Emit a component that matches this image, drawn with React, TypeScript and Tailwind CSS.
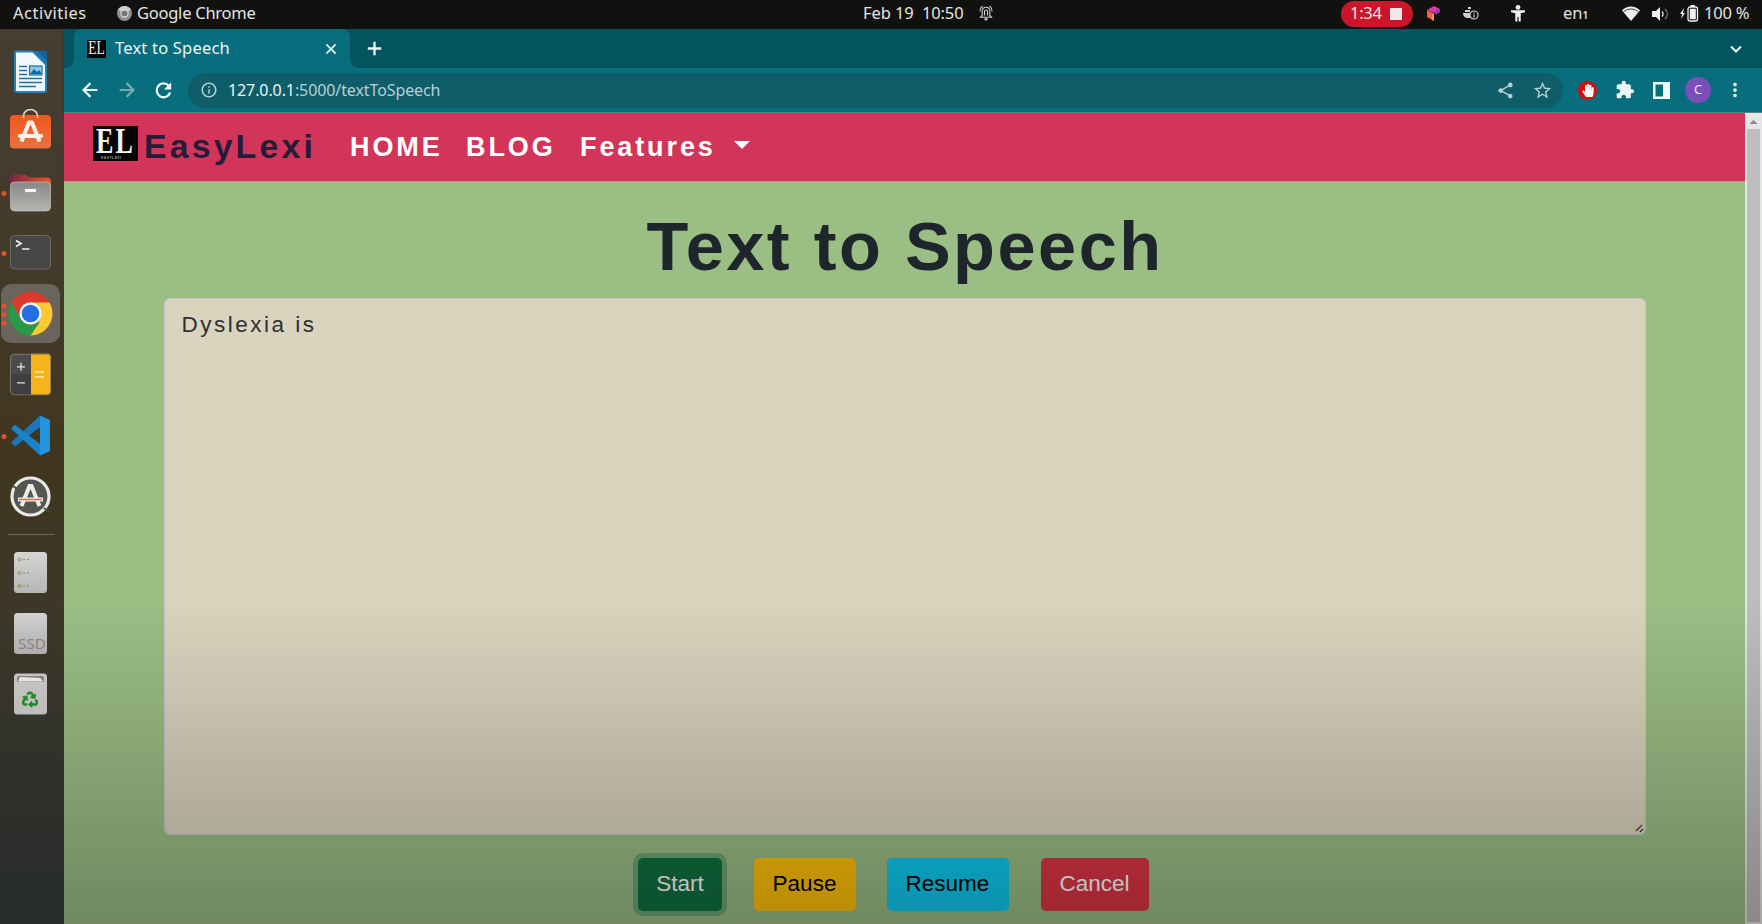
import type { ReactNode } from 'react';
import { MdExtension, MdInfoOutline, MdMoreVert, MdOutlineStarBorder, MdShare } from 'react-icons/md';
import { FaRecycle, FaHandPaper } from 'react-icons/fa';

function Glyph({ d, className, head }: { d: string; className: string; head?: string }) {
  return (
    <svg viewBox="0 0 24 24" fill="none" stroke="currentColor" strokeWidth="2.4" className={className}>
      <path d={d} />
      {head && <path d={head} fill="currentColor" stroke="none" />}
    </svg>
  );
}

function Logo({ className, small }: { className: string; small?: boolean }) {
  return (
    <svg viewBox="0 0 45 35" preserveAspectRatio="none" overflow="visible" className={className}>
      <rect width="45" height="35" fill="#050505" />
      <text x="3" y="26.5" fontFamily="Liberation Serif" fontSize="35" textLength="39" lengthAdjust="spacingAndGlyphs" fill="#f4f4f4">EL</text>
      {!small && <text x="8" y="33" fontFamily="Liberation Sans" fontSize="3.6" textLength="23" fill="#999">EASYLEXI</text>}
    </svg>
  );
}

function TopBar() {
  return (
    <div className="flex h-[29px] shrink-0 items-center bg-[#11110f] text-[16.5px] text-[#e4e4e2]">
      <div className="flex w-[863px] items-center pb-[2px] pl-[13px]">
        <span className="w-[104px] tracking-[0.5px]">Activities</span>
        <svg viewBox="0 0 16 16" className="mr-[5px] h-[15px] w-[15px]">
          <circle cx="8" cy="8" r="8" fill="#8f8f8f" />
          <path d="M8 8 1 4a8 8 0 0 1 14 0z" fill="#cfcfcf" />
          <circle cx="8" cy="8" r="3.8" fill="#777" stroke="#ddd" strokeWidth="1.2" />
        </svg>
        <span className="tracking-[-0.25px]">Google Chrome</span>
      </div>
      <div className="flex w-[478px] items-center pb-[3px]">
        <span className="w-[59px] tracking-[-0.1px]">Feb 19</span>
        <span className="w-[57px] tracking-[-0.15px]">10:50</span>
        <svg viewBox="0 0 14 16" className="h-[16px] w-[14px]" fill="none" stroke="#d2d2d0" strokeWidth="1.1">
          <path d="M3.200 10.500V6.500C3.200 3 5 2.200 7 2.200S10.800 3 10.800 6.500V10.500L12.500 12.300H1.500zM5.500 10.500V6.500C5.500 4.500 8.500 4.500 8.500 6.500V10.500M1 6.500C1 4 1.800 2.300 3.500 1M13 6.500C13 4 12.200 2.300 10.500 1" />
          <path d="M5.500 14.300h3" strokeWidth="2" />
        </svg>
      </div>
      <div className="flex items-center pb-[2px]">
        <div className="mr-[14px] flex h-[26px] w-[72px] items-center rounded-full bg-[#c9162b] pl-[9px]">
          <span className="w-[40px] pb-px tracking-[-0.3px]">1:34</span>
          <span className="h-[12px] w-[12px] bg-[#f1e9e9]" />
        </div>
        <svg viewBox="0 0 14 15" className="mr-[22px] h-[15px] w-[14px]">
          <path d="M0 4 7 0l6 3-6 4z" fill="#d63aa6" />
          <path d="M0 4l7 3.500V15L0 11z" fill="#f0603a" />
          <path d="M13 3v3L9 8.500 7 7z" fill="#a03bc8" />
          <path d="M5 9l2-1.500V15l-2-1z" fill="#f09050" />
        </svg>
        <svg viewBox="0 0 16 13" className="mr-[32px] h-[13px] w-[16px]" fill="#cfcfcd">
          <path d="M0 6h10v5H5C2 11 0 9 0 6zM2 3h5v2H2zM5 0h3v2H5z" />
          <circle cx="11" cy="8" r="4" fill="#11110f" stroke="#cfcfcd" strokeWidth="1.200" />
          <path d="M10.400 5.500h1.200v1.200h-1.200zM10.400 7.500h1.200v3h-1.200z" />
        </svg>
        <svg viewBox="0 0 14 17" className="mr-[38px] h-[17px] w-[14px]" fill="#efefed">
          <circle cx="7" cy="2.400" r="2.400" />
          <path d="M0 5.300h14v1.900l-4.300 1V16.500H7.600V12H6.400v4.500H4.300V8.200L0 7.200z" />
        </svg>
        <span className="w-[59px]">en<span className="text-[10px] font-semibold">1</span></span>
        <svg viewBox="0 0 18 15" className="mr-[12px] h-[15px] w-[18px]">
          <path d="M0 4.500C5-1 13-1 18 4.500L9 15z" fill="#efefed" />
          <path d="M1.500 6C6 2 12 2 16.500 6" fill="none" stroke="#11110f" strokeWidth=".8" />
        </svg>
        <svg viewBox="0 0 17 14" className="mr-[11px] h-[14px] w-[17px]">
          <path d="M0 4h4l4-4v14l-4-4H0z" fill="#efefed" />
          <path d="M10 4.500c1.300 1.300 1.300 3.700 0 5" fill="none" stroke="#efefed" strokeWidth="1.400" />
          <path d="M13 2c3 3 3 7 0 10" fill="none" stroke="#777" strokeWidth="1.400" />
        </svg>
        <svg viewBox="0 0 19 17" className="mr-[5px] h-[17px] w-[19px]">
          <path d="M4 3 0 9h2.200L1 14l4-6H3z" fill="#efefed" />
          <rect x="8" y="2" width="9.500" height="14" rx="2" fill="none" stroke="#efefed" strokeWidth="1.300" />
          <path d="M10.500 0h4.500v2h-4.500zM9.800 3.800h6v10.400h-6z" fill="#efefed" />
        </svg>
        <span className="whitespace-nowrap tracking-[-0.2px]">100 %</span>
      </div>
    </div>
  );
}

function Slot({ children, dots = 0, active }: { children: ReactNode; dots?: number; active?: boolean }) {
  const ys = dots === 3 ? [22, 30.5, 39] : dots === 1 ? [30.5] : [];
  return (
    <svg viewBox="0 0 61 60.75" className="h-[60.75px] w-[61px] shrink-0">
      {active && <rect x="1" y="0" width="59" height="59" rx="10" fill="#69645c" />}
      {ys.map((y) => <circle key={y} cx="4" cy={y} r="2.500" fill="#e0532a" />)}
      {children}
    </svg>
  );
}

function Dock() {
  return (
    <div className="flex w-[64px] shrink-0 flex-col border-r border-[#3b3a2b] bg-linear-to-b from-[#473e33] via-[#40361f] to-[#353b3b] pt-[12px]">
      <Slot>
        <path d="M16 10.500h17l13 13V49q0 2-2 2H17q-2 0-2-2V13q0-2.500 1-2.500z" fill="#f1f7fb" stroke="#2482bd" strokeWidth="2" />
        <path d="M38 10h9v9z" fill="#126299" /><path d="M33 10l14 14v-5L38 10z" fill="#1b73ad" />
        <path d="M19 25.500h8M19 29.500h8M19 33.500h8M19 37.500h23M19 41.500h23M19 45.500h17" stroke="#1b70a8" strokeWidth="1.700" />
        <rect x="29.500" y="25" width="12.500" height="9" fill="#8bc8ec" stroke="#1b70a8" strokeWidth="1.200" />
        <path d="M30 33l4-5 3 3 2-2 3 4z" fill="#14689f" />
      </Slot>
      <Slot>
        <defs><linearGradient id="bag" x2="0" y2="1"><stop stopColor="#f1571d" /><stop offset="1" stopColor="#ec7042" /></linearGradient></defs>
        <rect x="10" y="13" width="41" height="33.500" rx="4" fill="url(#bag)" />
        <path d="M23.500 16v-2a7 6.500 0 0 1 14 0v2" fill="none" stroke="#e5d9b5" strokeWidth="1.700" />
        <path d="M21.500 39.500 29 20.500h3l7.500 19" fill="none" stroke="#fff4e8" strokeWidth="4" strokeLinejoin="round" />
        <path d="M20 34h21" stroke="#fff4e8" strokeWidth="4.200" strokeLinecap="round" />
      </Slot>
      <Slot dots={1}>
        <defs>
          <linearGradient id="fold"><stop stopColor="#7b2146" /><stop offset="1" stopColor="#e85a26" /></linearGradient>
          <linearGradient id="file" x2="0" y2="1"><stop stopColor="#888" /><stop offset="1" stopColor="#b5b4b1" /></linearGradient>
        </defs>
        <g transform="translate(0 -1.5)">
          <path d="M10 17q0-4 4-4h11l4 3h18q4 0 4 4v8H10z" fill="url(#fold)" />
          <rect x="10.500" y="20.500" width="40" height="29" rx="4" fill="url(#file)" stroke="#c4c2bd" strokeWidth=".7" />
          <path d="M25 29h11" stroke="#f5f5f3" strokeWidth="3.200" />
        </g>
      </Slot>
      <Slot dots={1}>
        <rect x="10.500" y="12.500" width="40" height="33.500" rx="4" fill="#474747" stroke="#6a6964" />
        <path d="M16 17.500l5 3-5 3M22 26h7.500" fill="none" stroke="#eee" strokeWidth="1.700" />
      </Slot>
      <Slot dots={3} active>
        <circle cx="30.500" cy="29.500" r="22" fill="#db3b2f" />
        <path d="M30.500 18.500h19A22 22 0 0 1 30.500 51.500L40 35z" fill="#fcc934" />
        <path d="M11.400 18.500 21 35a11 11 0 0 0 14.500 4.300l4.500-1.300-9.500 13.500A22 22 0 0 1 11.400 18.500z" fill="#2b9848" />
        <circle cx="30.500" cy="29.500" r="11" fill="#f5f7fa" /><circle cx="30.500" cy="29.500" r="8.800" fill="#2270e2" />
      </Slot>
      <Slot>
        <g transform="translate(0 -.7)">
          <path d="M31 9.500H14q-4 0-4 4V30h21z" fill="#4d4c4c" /><path d="M10 30h21v20.500H14q-4 0-4-4z" fill="#3f3f40" />
          <path d="M31 9.500h16q4 0 4 4v33q0 4-4 4H31z" fill="#f6b41c" />
          <path d="M17 22.500h8M21 18.500v8M17 38.500h8" stroke="#e4e4e4" strokeWidth="1.300" />
          <path d="M35 27.500h9M35 32.500h9" stroke="#ffe09a" strokeWidth="1.800" />
          <rect x="10.500" y="10" width="40" height="40.500" rx="4" fill="none" stroke="#87816f" strokeWidth=".8" />
        </g>
      </Slot>
      <Slot dots={1}>
        <g transform="translate(0 -1)">
          <path d="M40 10.500 50 15v31L40 50.500z" fill="#2494df" />
          <path d="M40 10.500 11 37.500l4 4L40 22z" fill="#1a75ba" />
          <path d="M11 23.500l4-3.800L40 39v11.500z" fill="#1983ca" />
        </g>
      </Slot>
      <Slot>
        <circle cx="30.500" cy="30.500" r="18.500" fill="#555553" stroke="#eae9e5" strokeWidth="3.200" />
        <path d="M12 19l5 4M44 42l5 4" stroke="#504a40" strokeWidth="2" />
        <path d="M21.500 40 29.500 20h2l8 20" fill="none" stroke="#eeece7" strokeWidth="4" />
        <path d="M18 33.500h25" stroke="#eeece7" strokeWidth="4" /><path d="M19 33.500h23" stroke="#e46a3b" strokeWidth="1.400" />
      </Slot>
      <div className="mx-[8px] mt-[7px] mb-[7px] h-px shrink-0 bg-[#6d6850]" />
      <Slot>
        <defs><linearGradient id="disk" x2="0" y2="1"><stop stopColor="#d6d5d4" /><stop offset="1" stopColor="#b7b5b4" /></linearGradient></defs>
        <rect x="14" y="10" width="33" height="41" rx="3.500" fill="url(#disk)" />
        {[17.5, 31, 44].map((y) => (
          <g key={y}><circle cx="19.500" cy={y} r="1.500" fill="none" stroke="#78945c" /><circle cx="24" cy={y} r=".8" fill="#777" /><circle cx="28" cy={y} r=".8" fill="#777" /></g>
        ))}
      </Slot>
      <Slot>
        <rect x="14" y="10" width="33" height="41" rx="3.500" fill="url(#disk)" />
        <text x="18" y="45.500" fontFamily="Noto Sans" fontSize="15" textLength="28" lengthAdjust="spacingAndGlyphs" fill="#8b8a89">SSD</text>
      </Slot>
      <Slot>
        <rect x="14" y="9.500" width="33" height="41" rx="3.500" fill="#d3d2d0" />
        <path d="M17 18v-4q0-2 2-2h23q2 0 2 2v4z" fill="#8f8b87" /><path d="M18 17.500l2-4.500 20 1 3.500 3.500z" fill="#f6f5f3" />
        <FaRecycle x="22" y="27.500" width="17" height="17" color="#24962b" stroke="#24962b" strokeWidth="22" />
      </Slot>
    </div>
  );
}

function TabStrip() {
  return (
    <div className="flex h-[39px] shrink-0 items-end bg-[#03545f] text-[#eaf6f7]">
      <svg viewBox="0 0 10 10" className="h-[10px] w-[10px]"><path d="M10 0v10H0Q10 10 10 0z" fill="#086e7d" /></svg>
      <div className="flex h-full w-[276px] items-center rounded-t-[8px] bg-[#086e7d] pl-[13px]">
        <Logo small className="mr-[9px] h-[18px] w-[19px]" />
        <span className="w-[208px] text-[16.5px] tracking-[0.2px]">Text to Speech</span>
        <Glyph d="M5 5l14 14M19 5L5 19" className="h-[16px] w-[16px]" />
      </div>
      <svg viewBox="0 0 10 10" className="h-[10px] w-[10px]"><path d="M0 0v10h10Q0 10 0 0z" fill="#086e7d" /></svg>
      <Glyph d="M12 5v14M5 12h14" className="mb-[8px] ml-[3px] h-[23px] w-[23px]" />
      <Glyph d="M6 9l6 6 6-6" className="mr-[16px] mb-[9px] ml-auto h-[20px] w-[20px]" />
    </div>
  );
}

function Toolbar() {
  return (
    <div className="flex h-[45px] shrink-0 items-center border-b border-[#4d8792] bg-[#086e7d] text-[#eaf6f7]">
      <Glyph d="M20 12H5M12.500 4.500L5 12l7.500 7.500" className="ml-[15px] h-[22px] w-[22px]" />
      <Glyph d="M4 12h15M11.500 4.500L19 12l-7.500 7.500" className="ml-[15px] h-[22px] w-[22px] text-[#76aab3]" />
      <Glyph d="M17.500 7A7.200 7.200 0 1 0 19 14" head="M20 3.500V11h-7.500z" className="ml-[14px] h-[23px] w-[23px]" />
      <div className="mx-[13px] flex h-[35px] w-[1375px] items-center rounded-full bg-[#0f5d69] pl-[12px]">
        <MdInfoOutline className="mr-[10px] h-[18px] w-[18px] text-[#b6cfd3]" />
        <span className="text-[16px] tracking-[-0.1px] text-[#b4d1d4]"><span className="text-[#eaf6f7]">127.0.0.1</span>:5000/textToSpeech</span>
        <MdShare className="mr-[17px] ml-auto h-[19px] w-[19px] text-[#b6cfd3]" />
        <MdOutlineStarBorder className="mr-[10px] h-[21px] w-[21px] text-[#b6cfd3]" />
      </div>
      <span className="ml-[2px] flex h-[19px] w-[19px] items-center justify-center rounded-full bg-[#d30d10]"><FaHandPaper className="h-[13px] w-[12px] text-white" /></span>
      <MdExtension className="ml-[18px] h-[20px] w-[20px]" />
      <svg viewBox="0 0 17 17" className="ml-[18px] h-[17px] w-[17px]"><path d="M0 0h17v17H0zM2.500 2.500v12H10v-12z" fill="#f3fafb" fillRule="evenodd" /></svg>
      <span className="ml-[15px] flex h-[26px] w-[26px] items-center justify-center rounded-full bg-[#7b4fb9] text-[13px] text-[#efe6f8]">C</span>
      <MdMoreVert className="ml-[13px] h-[22px] w-[22px]" />
    </div>
  );
}

function Page() {
  return (
    <div className="flex min-h-0 flex-1">
      <div className="flex w-[1681px] shrink-0 flex-col bg-[#9bbe85] font-['Liberation_Sans',sans-serif]">
        <nav className="flex h-[69px] shrink-0 items-center border-b border-[#b89c78] bg-[#d23559] pl-[29px] font-bold tracking-[2.9px] text-white">
          <Logo className="mb-[8px] h-[35px] w-[45px]" />
          <span className="ml-[6px] w-[206px] pb-[2px] text-[33.75px] tracking-[3.2px] text-[#261c38]">EasyLexi</span>
          <span className="w-[116px] text-[27px]">HOME</span>
          <span className="w-[114px] text-[27px]">BLOG</span>
          <span className="text-[27px]">Features</span>
          <svg viewBox="0 0 16 8" className="mb-[5px] ml-[18px] h-[8px] w-[16px]"><path d="M0 0h16L8 8z" fill="#fff" /></svg>
        </nav>
        <h1 className="mt-[23px] h-[93px] pl-px text-center text-[68.5px] leading-[83px] font-bold tracking-[2.5px] text-[#1f262b]">Text to Speech</h1>
        <div className="relative mx-auto h-[537px] w-[1482px] shrink-0 rounded-[6px] border border-[#bfcad0] bg-[#dad4be] px-[17px] py-[8px] text-[22.5px] leading-[35px] tracking-[2.5px] text-[#2a3034]">
          Dyslexia is
          <svg viewBox="0 0 9 9" className="absolute right-[1px] bottom-[1px] h-[9px] w-[9px]"><path d="M1 7 7 1M5 8l3-3" stroke="#3c3a34" strokeWidth="1.200" /></svg>
        </div>
        <div className="mt-[23px] flex text-[22.5px]">
          <button className="ml-[574px] h-[53px] w-[84px] rounded-[5px] bg-[#10703f] pb-[2px] text-white ring-[5px] ring-[#6ba777]">Start</button>
          <button className="ml-[32px] h-[53px] w-[102px] rounded-[5px] bg-[#ffc107] pr-[8px] pb-[2px] pl-[7px] text-black">Pause</button>
          <button className="ml-[31px] h-[53px] w-[122px] rounded-[5px] bg-[#0dcaf0] pr-[8px] pb-[2px] pl-[7px] text-black">Resume</button>
          <button className="ml-[32px] h-[53px] w-[108px] rounded-[5px] bg-[#dc3545] pr-[8px] pb-[2px] pl-[7px] text-white">Cancel</button>
        </div>
      </div>
      <div className="flex flex-1 flex-col bg-[#e6e6e6] px-[2px]">
        <svg viewBox="0 0 13 16" className="h-[16px] w-[13px]"><path d="M2.500 11 6.500 7l4 4z" fill="#8a8a8a" /></svg>
        <div className="mb-[2px] w-[13px] flex-1 bg-[#bdbdbd]" />
      </div>
    </div>
  );
}

export default function App() {
  return (
    <div className="relative flex h-[924px] w-[1762px] flex-col overflow-hidden font-['Noto_Sans',sans-serif]">
      <TopBar />
      <div className="flex min-h-0 flex-1">
        <Dock />
        <div className="flex min-w-0 flex-1 flex-col">
          <TabStrip />
          <Toolbar />
          <Page />
        </div>
      </div>
      <div className="pointer-events-none absolute inset-x-0 bottom-0 h-[325px] bg-linear-to-b from-transparent to-black/28" />
    </div>
  );
}
